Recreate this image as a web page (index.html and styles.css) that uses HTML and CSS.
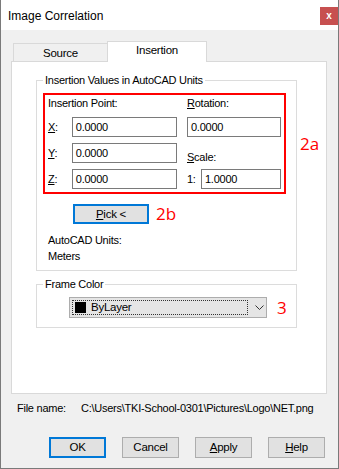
FILE: index.html
```html
<!DOCTYPE html>
<html>
<head>
<meta charset="utf-8">
<link rel="stylesheet" href="styles.css">
</head>
<body>
<div class="window">
  <div class="titlebar">
    <span class="title">Image Correlation</span>
    <span class="close">x</span>
  </div>
  <div class="content">
    <div class="tabs">
      <div class="tab">Source</div>
      <div class="tab active">Insertion</div>
    </div>
    <div class="panel">
      <fieldset class="group">
        <legend>Insertion Values in AutoCAD Units</legend>
        <div class="gbody gbody-insert">
          <div class="redrow">
            <div class="redbox">
              <div class="col col-left">
                <div class="hdr">Insertion Point:</div>
                <div class="row"><span class="lbl"><u>X</u>:</span><span class="input w-left">0.0000</span></div>
                <div class="row"><span class="lbl"><u>Y</u>:</span><span class="input w-left">0.0000</span></div>
                <div class="row"><span class="lbl"><u>Z</u>:</span><span class="input w-left">0.0000</span></div>
              </div>
              <div class="col col-right">
                <div class="hdr"><u>R</u>otation:</div>
                <div class="row"><span class="input w-rot">0.0000</span></div>
                <div class="hdr scale"><u>S</u>cale:</div>
                <div class="row"><span class="lbl one">1:</span><span class="input w-scale">1.0000</span></div>
              </div>
            </div>
            <span class="note note-2a">2a</span>
          </div>
          <div class="pickrow">
            <span class="btn btn-focus pick"><u>P</u>ick &lt;</span>
            <span class="note">2b</span>
          </div>
          <div class="units units-first">AutoCAD Units:</div>
          <div class="units">Meters</div>
        </div>
      </fieldset>
      <fieldset class="group group-frame">
        <legend>Frame Color</legend>
        <div class="gbody gbody-frame">
          <div class="combo">
            <div class="focusrect">
              <span class="swatch"></span>
              <span class="combotext">ByLayer</span>
            </div>
            <svg class="chev" width="9" height="6" viewBox="0 0 9 6"><path d="M0.5 0.5 L4.5 4.5 L8.5 0.5" fill="none" stroke="#333" stroke-width="1"/></svg>
          </div>
          <span class="note note-3">3</span>
        </div>
      </fieldset>
    </div>
    <div class="filerow">
      <span class="fname">File name:</span>
      <span class="fpath">C:\Users\TKI-School-0301\Pictures\Logo\NET.png</span>
    </div>
    <div class="buttons">
      <span class="btn btn-focus">OK</span>
      <span class="btn">Cancel</span>
      <span class="btn"><u>A</u>pply</span>
      <span class="btn"><u>H</u>elp</span>
    </div>
  </div>
</div>
</body>
</html>
```
FILE: styles.css
```css
html, body {
  margin: 0;
  padding: 0;
  width: 339px;
  height: 469px;
  overflow: hidden;
  background: #ffffff;
}
.window {
  box-sizing: border-box;
  width: 339px;
  height: 469px;
  border: 1px solid #7a7a7a;
  border-top: 0;
  background: #f0f0f0;
  display: flex;
  flex-direction: column;
  font-family: "Liberation Sans", Arial, sans-serif;
  font-size: 11px;
  letter-spacing: -0.25px;
  color: #000;
}
.titlebar {
  height: 30px;
  background: #ffffff;
  display: flex;
  align-items: center;
  padding-left: 7px;
  flex-shrink: 0;
}
.title {
  font-size: 12px;
  letter-spacing: 0;
  color: #000;
  margin-top: 1px;
}
.close {
  margin-left: auto;
  align-self: flex-start;
  margin-top: 7px;
  width: 18px;
  height: 18px;
  background: #c75050;
  color: #fff;
  font-weight: bold;
  font-size: 10px;
  line-height: 17px;
  text-align: center;
  letter-spacing: 0;
}
.content {
  padding: 11px 11px 0 10px;
  display: flex;
  flex-direction: column;
}
.tabs {
  display: flex;
  align-items: flex-end;
  padding-left: 2px;
  height: 20px;
  position: relative;
  z-index: 1;
}
.tab {
  box-sizing: border-box;
  width: 95px;
  height: 18px;
  border: 1px solid #d9d9d9;
  border-bottom: 0;
  background: #f0f0f0;
  text-align: center;
  line-height: 18px;
  font-size: 11.5px;
}
.tab.active {
  width: 100px;
  height: 21px;
  margin-bottom: -1px;
  background: #ffffff;
  margin-left: -1px;
  line-height: 17px;
}
.panel {
  box-sizing: border-box;
  height: 333px;
  background: #ffffff;
  border: 1px solid #d9d9d9;
  padding: 12px 29px 0 24px;
  display: flex;
  flex-direction: column;
}
.group {
  margin: 0;
  padding: 0;
  border: 1px solid #dcdcdc;
  min-width: 0;
}
.group legend {
  padding: 0 2px;
  margin-inline-start: 6px;
  line-height: 13px;
  height: 13px;
}
.gbody-insert {
  padding: 6px 10px 6px 6px;
}
.redrow {
  display: flex;
  align-items: center;
}
.redbox {
  box-sizing: border-box;
  flex-shrink: 0;
  width: 243px;
  height: 101px;
  border: 2px solid #ff0000;
  padding: 0 0 2px 3px;
  display: flex;
}
.col {
  display: flex;
  flex-direction: column;
}
.col-left {
  width: 129px;
  margin-right: 10px;
}
.hdr {
  line-height: 16px;
  height: 16px;
  margin-bottom: 6px;
}
.hdr.scale {
  margin-top: 6px;
  margin-bottom: 4px;
}
.row {
  display: flex;
  align-items: center;
  height: 20px;
  margin-bottom: 6px;
}
.col .row:last-child {
  margin-bottom: 0;
}
.lbl {
  width: 24px;
}
.lbl.one {
  width: 14px;
}
.input {
  box-sizing: border-box;
  height: 20px;
  border: 1px solid #7a7a7a;
  background: #fff;
  padding-left: 3px;
  line-height: 18px;
}
.w-left { width: 106px; }
.w-rot { width: 94px; }
.w-scale { width: 80px; }
.pickrow {
  display: flex;
  align-items: center;
  margin-top: 10px;
  padding-left: 30px;
}
.btn {
  box-sizing: border-box;
  height: 21px;
  width: 57px;
  background: #e1e1e1;
  border: 1px solid #adadad;
  text-align: center;
  line-height: 19px;
  font-size: 11.5px;
}
.btn-focus {
  border: 2px solid #0078d7;
  line-height: 17px;
}
.pick {
  width: 76px;
  height: 20px;
  line-height: 16px;
}
.note {
  color: #ff0000;
  font-size: 17px;
  letter-spacing: 0;
  margin-left: 7px;
  line-height: 20px;
  font-family: "Open Sans", "Liberation Sans", sans-serif;
}
.note-2a {
  margin-left: 14px;
  flex-shrink: 0;
}
.units {
  line-height: 16px;
  padding-left: 5px;
}
.units-first {
  margin-top: 8px;
}
.group-frame {
  margin-top: 7px;
}
.gbody-frame {
  padding: 6px 0 9px 32px;
  display: flex;
  align-items: center;
}
.combo {
  box-sizing: border-box;
  width: 198px;
  height: 21px;
  background: #e5e5e5;
  border: 1px solid #adadad;
  display: flex;
  align-items: center;
  padding: 2px;
}
.focusrect {
  box-sizing: border-box;
  height: 15px;
  width: 176px;
  border: 1px dotted #333;
  display: flex;
  align-items: center;
  padding-left: 2px;
}
.swatch {
  width: 11px;
  height: 11px;
  background: #000;
  margin-right: 5px;
}
.combotext {
  line-height: 13px;
  font-size: 11.5px;
}
.chev {
  margin-left: 7px;
}
.note-3 {
  margin-left: 10px;
}
.filerow {
  display: flex;
  margin-top: 6px;
  padding-left: 6px;
  line-height: 16px;
}
.fname {
  width: 64px;
}
.buttons {
  display: flex;
  margin-top: 21px;
  padding-left: 38px;
  gap: 16px;
}
```
